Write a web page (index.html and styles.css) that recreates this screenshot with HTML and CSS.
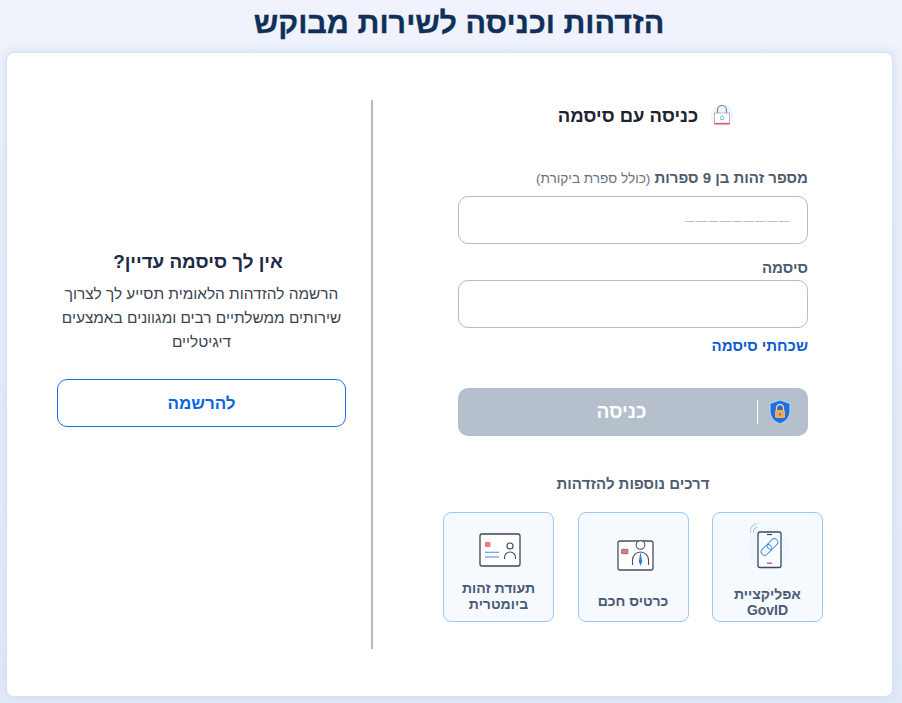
FILE: index.html
```html
<!doctype html>
<html lang="he" dir="rtl">
<head>
    <title>הזדהות וכניסה לשירות מבוקש</title>
    <meta charset="utf-8">
    <link rel="stylesheet" href="styles.css">
</head>
<body>
<h1 class="page-title">הזדהות וכניסה לשירות מבוקש</h1>
<div class="card">
    <div class="login">
        <div class="login-head">
            <svg class="lock-icon" width="24" height="24" viewBox="0 0 24 24">
                <circle cx="12" cy="13" r="11" fill="#f1f6fd"/>
                <path d="M7.500 10V7a4.500 4.500 0 0 1 9 0v3" fill="none" stroke="#7b8290" stroke-width="1.200"/>
                <rect x="4.500" y="10" width="15" height="11" fill="#fff" stroke="#a5a9b3" stroke-width=".8"/>
                <rect x="4.500" y="19.800" width="15" height="1.500" fill="#e2596a"/>
                <path d="M12 12.500c1.100 1.400 1.600 2 1.600 2.800a1.600 1.600 0 0 1-3.200 0c0-.8.500-1.400 1.600-2.800z" fill="none" stroke="#5aa5ee" stroke-width=".9"/>
                <path d="M17.500 3l1.500 1.500M19.500 6.500h1.500" stroke="#bcdcf8" fill="none"/>
            </svg>
            <h2 class="login-title">כניסה עם סיסמה</h2>
        </div>
        <form class="login-form">
            <label class="field-label">מספר זהות בן 9 ספרות <span class="field-hint">(כולל ספרת ביקורת)</span></label>
            <div class="field-input"><span class="mask">_________</span></div>
            <label class="field-label field-label-pw">סיסמה</label>
            <div class="field-input field-input-pw"></div>
            <a class="forgot">שכחתי סיסמה</a>
            <div class="submit">
                <svg class="shield-icon" width="24" height="26" viewBox="0 0 24 26">
                    <path d="M12 1l10 3.500v8c0 6-4.500 10.500-10 12.500C6.500 23 2 18.500 2 12.500v-8z" fill="#1f6fd6" stroke="#a6d2f8" stroke-width="1.200"/>
                    <path d="M8.500 11V9a3.500 3.500 0 0 1 7 0v2" fill="none" stroke="#f3d3ad" stroke-width="1.300"/>
                    <rect x="7" y="11" width="10" height="8" rx="1" fill="#eba968"/>
                    <rect x="11" y="14" width="2" height="2.500" fill="#b0763c"/>
                </svg>
                <span class="submit-sep"></span>
                <span class="submit-text">כניסה</span>
            </div>
        </form>
        <div class="more-title">דרכים נוספות להזדהות</div>
        <div class="methods">
            <div class="method">
                <svg class="method-icon" width="46" height="73" viewBox="0 0 46 73">
                    <circle cx="24" cy="36" r="21" fill="#f0f6fe"/>
                    <rect x="13" y="19" width="23" height="35.500" rx="2" fill="#f9fbfe" stroke="#3b4a63" stroke-width="1.300"/>
                    <path d="M22 21.500h5" stroke="#3b4a63" stroke-width="1.200"/>
                    <rect x="22" y="49.500" width="5" height="1.500" fill="#e2596a"/>
                    <g fill="none" stroke="#3d8fe8" stroke-width="1">
                        <rect x="15.500" y="33.500" width="12" height="7" rx="3.500" transform="rotate(-45 21.500 37)"/>
                        <rect x="21.500" y="27.500" width="12" height="7" rx="3.500" transform="rotate(-45 27.500 31)"/>
                    </g>
                    <path d="M5.500 20a8 8 0 0 1 7-9.500M8.500 20a5 5 0 0 1 4-6" fill="none" stroke="#a8d0f5" stroke-width="1.200"/>
                </svg>
                <span class="method-name">אפליקציית GovID</span>
            </div>
            <div class="method">
                <svg class="method-icon" width="46" height="80" viewBox="0 0 46 80">
                    <rect x="8" y="28" width="35" height="29" rx="2" fill="#fff" stroke="#4a4f5c" stroke-width="1.300"/>
                    <rect x="11.500" y="36.300" width="6.500" height="4.400" rx=".8" fill="#f0778a" stroke="#4a4f5c" stroke-width=".6"/>
                    <circle cx="30.500" cy="32" r="4.300" fill="#fff" stroke="#4a4f5c" stroke-width="1.100"/>
                    <path d="M22.500 52v-5a8 8 0 0 1 16 0v5" fill="none" stroke="#4a4f5c" stroke-width="1.100"/>
                    <path d="M30.500 39l-1.700 9.500 1.700 4.500 1.700-4.500z" fill="#2a7de1"/>
                </svg>
                <span class="method-name">כרטיס חכם</span>
            </div>
            <div class="method">
                <svg class="method-icon" width="46" height="67" viewBox="0 0 46 67">
                    <rect x="4" y="21" width="40" height="32" rx="2" fill="#fff" stroke="#3f4450" stroke-width="1.300"/>
                    <rect x="9" y="29" width="5.500" height="5" rx="1" fill="#f0778a"/>
                    <path d="M9 39.300h14M9 44h14" stroke="#3d8fe8" stroke-width="1.100"/>
                    <circle cx="34" cy="33" r="3" fill="none" stroke="#3f4450" stroke-width="1.100"/>
                    <path d="M28.500 46v-1.500a5.500 5.500 0 0 1 11 0V46" fill="none" stroke="#3f4450" stroke-width="1.100"/>
                </svg>
                <span class="method-name">תעודת זהות ביומטרית</span>
            </div>
        </div>
    </div>
    <div class="signup">
        <h2 class="signup-title">אין לך סיסמה עדיין?</h2>
        <p class="signup-text">הרשמה להזדהות הלאומית תסייע לך לצרוך שירותים ממשלתיים רבים ומגוונים באמצעים דיגיטליים</p>
        <a class="signup-btn">להרשמה</a>
    </div>
</div>
</body>
</html>
```

FILE: styles.css
```css
* { box-sizing: border-box; }

html, body { height: 100%; }

body {
    margin: 0;
    padding: 0 9px 6px 6px;
    display: flex;
    flex-direction: column;
    font-family: "Liberation Sans", "Open Sans", sans-serif;
    color: #1d2b44;
    background: linear-gradient(#f0f3fb, #e2eaf7);
    overflow: hidden;
}

.page-title {
    margin: 0;
    height: 52px;
    padding-left: 19px;
    font-size: 30.500px;
    line-height: 45px;
    font-weight: 700;
    text-align: center;
    color: #10305a;
    -webkit-text-stroke: 0.3px #10305a;
}

.card {
    flex: 1;
    display: flex;
    background: #fff;
    border: 1px solid #d7e0ee;
    border-radius: 8px;
    box-shadow: 0 0 12px #cfdcf2;
    padding: 47px 0;
}

.login {
    width: 521px;
    height: 549px;
    border-left: 2px solid #b0bcc9;
    padding: 0 84px 0 85px;
}

.login-head {
    display: flex;
    align-items: center;
    justify-content: center;
    gap: 12px;
    height: 30px;
    padding-left: 26px;
}

.login-title {
    margin: 0;
    padding-top: 2px;
    font-size: 18.500px;
    font-weight: 700;
    color: #1f2430;
}

.login-form { display: flex; flex-direction: column; margin-top: 38px; }

.field-label {
    height: 20px;
    font-size: 15px;
    line-height: 20px;
    font-weight: 700;
    color: #4f5b6f;
}

.field-label-pw { margin-top: 14px; }

.field-hint { font-size: 13.600px; font-weight: 400; color: #6b7280; }

.field-input {
    height: 48px;
    margin-top: 8px;
    border: 1px solid #b9b9c9;
    border-radius: 10px;
    background: #fff;
    padding: 0 16px 12px 0;
    display: flex;
    align-items: center;
}

.field-input-pw { margin-top: 2px; }

.mask { font-size: 18px; font-weight: 700; letter-spacing: 1.800px; color: #8f8f8f; }

.forgot {
    margin-top: 8px;
    font-size: 15px;
    line-height: 20px;
    font-weight: 700;
    color: #0b5cd0;
}

.submit {
    margin-top: 32px;
    height: 48px;
    display: flex;
    align-items: center;
    background: #b5c0cc;
    border-radius: 10px;
    padding-right: 16px;
}

.submit-sep { width: 1px; height: 24px; background: #fff; margin-right: 10px; }

.submit-text {
    flex: 1;
    padding-left: 28px;
    text-align: center;
    font-size: 19px;
    font-weight: 700;
    color: #fff;
}

.more-title {
    margin-top: 38px;
    text-align: center;
    font-size: 15px;
    line-height: 20px;
    font-weight: 700;
    color: #4f5b6f;
}

.methods {
    display: flex;
    justify-content: space-between;
    margin: 18px -15px 0;
}

.method {
    width: 111px;
    height: 110px;
    display: flex;
    flex-direction: column;
    align-items: center;
    padding: 0 8px;
    background: #f6f9fe;
    border: 1px solid #9cc8f7;
    border-radius: 8px;
}

.method-icon { flex: none; }

.method-name {
    text-align: center;
    font-size: 14px;
    line-height: 16px;
    font-weight: 700;
    color: #4a5a75;
}

.signup {
    flex: 1;
    padding: 150px 25px 0 50px;
    text-align: center;
}

.signup-title {
    margin: 0;
    padding-right: 7px;
    font-size: 18.800px;
    line-height: 24px;
    font-weight: 700;
    color: #1d2b44;
}

.signup-text {
    margin: 8px 0 0;
    font-size: 15.400px;
    line-height: 24px;
    color: #3c4350;
}

.signup-btn {
    display: block;
    height: 48px;
    margin-top: 25px;
    border: 1px solid #1a6fe0;
    border-radius: 10px;
    font-size: 17px;
    line-height: 48px;
    font-weight: 700;
    color: #0b66e4;
}
```
